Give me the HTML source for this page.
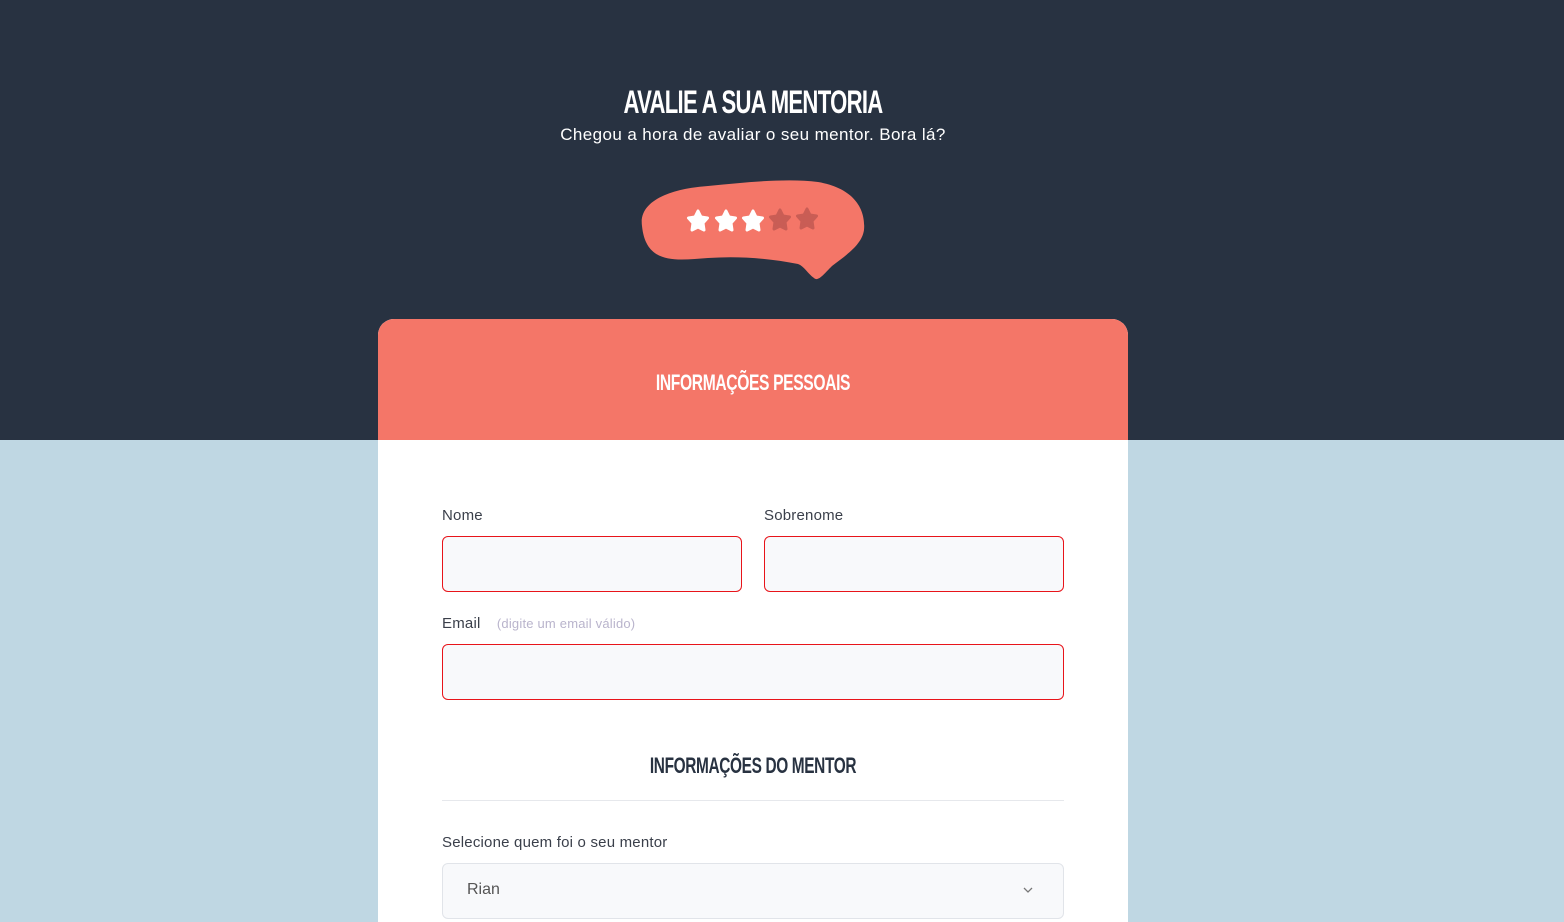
<!DOCTYPE html>
<html><head><meta charset="utf-8"><style>
*{margin:0;padding:0;box-sizing:border-box}
html,body{width:1564px;height:922px;overflow:hidden}
body{background:#bfd7e3;font-family:"Liberation Sans",sans-serif;position:relative}
.top{position:absolute;left:0;top:0;width:1564px;height:440px;background:#283241}
.h1{position:absolute;top:84px;left:0;width:1506px;text-align:center;color:#fff;font-weight:bold;font-size:32px;letter-spacing:-1px;transform:scaleX(0.69);transform-origin:753px 0}
.sub{position:absolute;top:125px;left:0;width:1506px;text-align:center;color:#fff;font-size:17px;letter-spacing:0.4px}
.card{position:absolute;left:378px;top:319px;width:750px;height:603px;background:#fff;border-radius:16px 16px 0 0;overflow:hidden}
.chead{height:121px;background:#f47668}
.chead div{color:#fff;text-align:center;line-height:128px;font-weight:bold;font-size:22px;letter-spacing:-0.5px;transform:scaleX(0.71)}
.lbl{position:absolute;font-size:15px;color:#3a3f4a;letter-spacing:0.2px}
.in{position:absolute;height:56px;border:1px solid #e8141a;border-radius:6px;background:#f8f9fb}
.h2{position:absolute;left:0;top:753px;width:1506px;text-align:center;font-weight:bold;font-size:22px;color:#283241;letter-spacing:-0.5px;transform:scaleX(0.7);transform-origin:753px 0}
</style></head><body>
<div class="top"></div>
<div class="h1">AVALIE A SUA MENTORIA</div>
<div class="sub">Chegou a hora de avaliar o seu mentor. Bora lá?</div>
<svg style="position:absolute;left:638px;top:178px" width="230" height="104" viewBox="0 0 230 104">
<defs><path id="s" d="M0 -10 L3 -4 L9.5 -3 L5 2 L6 9 L0 6 L-6 9 L-5 2 L-9.5 -3 L-3 -4Z" stroke-linejoin="round" stroke-width="3"/></defs>
<path d="M4 48 C0 20 40 10 70 8 C110 4 150 0 180 4 C215 10 228 30 226 52 C224 66 210 76 194 88 C186 96 180 104 176 100 C170 96 166 88 160 86 C130 80 100 78 70 80 C40 82 8 88 4 48Z" fill="#f47668"/>
<use href="#s" x="60" y="43" fill="#fff" stroke="#fff"/>
<use href="#s" x="88" y="43" fill="#fff" stroke="#fff"/>
<use href="#s" x="115" y="43" fill="#fff" stroke="#fff"/>
<use href="#s" x="142" y="42" fill="#c95d55" stroke="#c95d55"/>
<use href="#s" x="169" y="41" fill="#c95d55" stroke="#c95d55"/>
</svg>
<div class="card">
<div class="chead"><div>INFORMAÇÕES PESSOAIS</div></div>
<div class="lbl" style="left:64px;top:188px">Nome</div>
<div class="lbl" style="left:386px;top:188px">Sobrenome</div>
<div class="in" style="left:64px;top:217px;width:300px"></div>
<div class="in" style="left:386px;top:217px;width:300px"></div>
<div class="lbl" style="left:64px;top:296px">Email <span style="color:#b9b4cc;font-size:13px;margin-left:12px">(digite um email válido)</span></div>
<div class="in" style="left:64px;top:325px;width:622px"></div>
<div style="position:absolute;left:64px;top:481px;width:622px;height:1px;background:#e6e8ec"></div>
<div class="lbl" style="left:64px;top:515px">Selecione quem foi o seu mentor</div>
<div style="position:absolute;left:64px;top:544px;width:622px;height:56px;border:1px solid #e1e4e9;border-radius:6px;background:#f8f9fb;font-size:16px;color:#555;padding:17px 24px">Rian
<svg style="position:absolute;right:30px;top:23px" width="10" height="7"><path d="M1 1l4 4 4-4" stroke="#777" fill="none" stroke-width="1.3"/></svg></div>
</div>
<div class="h2">INFORMAÇÕES DO MENTOR</div>
</body></html>
